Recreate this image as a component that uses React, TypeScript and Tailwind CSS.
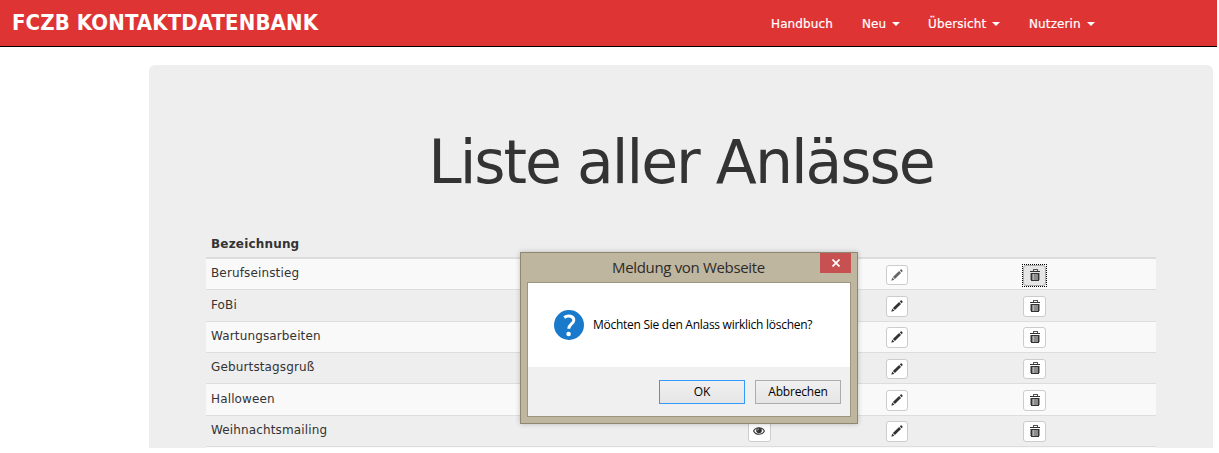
import type { ReactNode } from 'react';

const ui = "font-['DejaVu_Sans',sans-serif]";

const rows = [
  { name: 'Berufseinstieg', row: 'h-[31px]', pad: 'pt-[6px]', btn: 'h-5', text: 'pt-[5px]' },
  { name: 'FoBi', row: 'h-8', pad: 'pt-[6px]', btn: 'h-[21px]', text: 'pt-[6px]' },
  { name: 'Wartungsarbeiten', row: 'h-[31px]', pad: 'pt-[5px]', btn: 'h-[21px]', text: 'pt-[5px]' },
  { name: 'Geburtstagsgruß', row: 'h-[31px]', pad: 'pt-[6px]', btn: 'h-5', text: 'pt-[5px]' },
  { name: 'Halloween', row: 'h-8', pad: 'pt-[6px]', btn: 'h-[21px]', text: 'pt-[6px]' },
  { name: 'Weihnachtsmailing', row: 'h-[31px]', pad: 'pt-[5px]', btn: 'h-[21px]', text: 'pt-[5px]' },
];

const nav = [
  { label: 'Handbuch', caret: false, cls: 'w-[91px]' },
  { label: 'Neu', caret: true, cls: 'w-[66px]' },
  { label: 'Übersicht', caret: true, cls: 'w-[101px]' },
  { label: 'Nutzerin', caret: true, cls: 'w-[70px]' },
];

function EyeIcon() {
  return (
    <svg className="-ml-px mb-px" width="12" height="10" viewBox="0 0 12 10" fill="none">
      <path d="M.6 5C2.6.6 9.4.6 11.4 5 9.4 9.4 2.6 9.4.6 5Z" stroke="#333" strokeWidth="1.1" />
      <circle cx="6" cy="4.5" r="2.8" fill="#333" />
      <path d="M4.5 4.4Q4.6 3 6 2.8" stroke="#ccc" strokeWidth=".8" />
    </svg>
  );
}

function PencilIcon({ faded }: { faded: boolean }) {
  return (
    <svg className="mb-px" width="12" height="12" viewBox="0 0 12 12" fill={faded ? '#666' : '#333'}>
      <path d="M.3 11.7 1.3 8.6 3.4 10.7Z" />
      <path d="M1.9 8 8.1 2 10 3.9 3.9 10Z" />
      <path d="M8.8 1.4 9.7.5Q10.2.1 10.7.6L11.4 1.3Q11.9 1.8 11.4 2.4L10.6 3.2Z" />
    </svg>
  );
}

function TrashIcon() {
  return (
    <svg className="mb-[2px] ml-px" width="10" height="12" viewBox="0 0 10 12" fill="none" shapeRendering="crispEdges">
      <path d="M3 2V.5H7V2" stroke="#555" />
      <path d="M0 2.5H10" stroke="#333" />
      <path d="M1.5 4.5H8.5V11.5H1.5Z" fill="#8c8c8c" stroke="#333" />
      <path d="M3.5 5V11" stroke="#b5b5b5" />
      <path d="M.5 4V11" stroke="#999" />
      <path d="M9.5 4V11" stroke="#999" />
    </svg>
  );
}

function IconButton({ children, cls, pressed = false }: { children: ReactNode; cls: string; pressed?: boolean }) {
  return (
    <button
      className={`flex items-center justify-center rounded-[3px] border ${
        pressed ? 'border-[#adadad] bg-[#e6e6e6]' : 'border-[#ccc] bg-white'
      } ${cls}`}
    >
      {children}
    </button>
  );
}

function Dialog() {
  return (
    <div className="absolute left-[520px] top-[252px] flex h-[172px] w-[338px] flex-col border border-[#8f8772] bg-[#bfb6a0] px-[6px] pb-[6px] font-['Open_Sans',sans-serif] shadow-[0_0_5px_rgba(0,0,0,0.22)]">
      <div className="flex h-[29px] shrink-0 justify-end">
        <div className="flex-1 pl-[85px] pt-[3px] text-[15px] leading-[22px] tracking-[-0.33px] whitespace-nowrap text-[#2d2b27]">
          Meldung von Webseite
        </div>
        <button className="flex h-5 w-[31px] items-center justify-center bg-[#c75050]">
          <svg width="8" height="8" viewBox="0 0 8 8" stroke="white" strokeWidth="1.7">
            <path d="M.5.5 7.5 7.5M7.5.5.5 7.5" />
          </svg>
        </button>
      </div>
      <div className="flex flex-1 flex-col border border-[#9f957e] bg-[#f0f0f0]">
        <div className="flex h-[84px] items-center bg-white pl-[26px]">
          <svg width="30" height="30" viewBox="0 0 30 30" fill="none">
            <circle cx="15" cy="15" r="15" fill="#1979ca" />
            <path d="M10.2 7.4C14 4.8 20 5.8 19.8 10.2 19.6 14 14.8 14 14.8 18.8" stroke="white" strokeWidth="3" />
            <circle cx="14.6" cy="24" r="2.3" fill="white" />
          </svg>
          <p className="ml-[9px] text-[12px] tracking-[-0.27px] whitespace-nowrap text-black">
            Möchten Sie den Anlass wirklich löschen?
          </p>
        </div>
        <div className="flex justify-end gap-[10px] pr-[9px] pt-[13px] text-[12px] tracking-[-0.2px] text-black">
          <button className="h-6 w-[86px] border border-[#3399ff] bg-gradient-to-b from-[#f0f0f0] to-[#e5e5e5] leading-[22px]">
            OK
          </button>
          <button className="h-6 w-[86px] border border-[#acacac] bg-gradient-to-b from-[#f0f0f0] to-[#e5e5e5] leading-[22px]">
            Abbrechen
          </button>
        </div>
      </div>
    </div>
  );
}

export default function App() {
  return (
    <div className={`relative h-[453px] w-[1219px] overflow-hidden bg-white text-[#333] ${ui}`}>
      <header className="flex h-[47px] w-[1217px] border-b border-black bg-[#df3434] text-white">
        <div className="w-[771px] pl-[12px] pt-[8px] text-[22px] leading-[30px] font-bold tracking-[0.1px] whitespace-nowrap font-['DejaVu_Sans_Condensed','DejaVu_Sans',sans-serif] [font-stretch:condensed]">
          FCZB KONTAKTDATENBANK
        </div>
        <nav className="mt-[14px] flex h-5 text-[12px] leading-5 tracking-[0.12px]">
          {nav.map((n) => (
            <a key={n.label} className={`flex items-center whitespace-nowrap [-webkit-text-stroke:0.2px_white] ${n.cls}`}>
              {n.label}
              {n.caret && (
                <svg className="ml-[6px]" width="8" height="4" viewBox="0 0 8 4" fill="white">
                  <path d="M0 0H8L4 4Z" />
                </svg>
              )}
            </a>
          ))}
        </nav>
      </header>
      <main className="mt-[18px] ml-[149px] h-[383px] w-[1064px] overflow-hidden rounded-t-[6px] bg-[#eee] px-[57px] pt-[62px]">
        <h1 className="h-[70px] text-center text-[60px] leading-[70px] tracking-[-2px] whitespace-nowrap">Liste aller Anlässe</h1>
        <div className="mt-[32px] h-[30px] border-b-2 border-[#ddd] pl-[5px] pt-[6px] text-[12px] leading-[18px] font-bold tracking-[0.18px]">
          Bezeichnung
        </div>
        {rows.map((r, i) => (
          <div
            key={r.name}
            className={`flex border-b border-[#ddd] pl-[5px] ${r.row} ${i % 2 === 0 ? 'bg-[#f9f9f9]' : ''}`}
          >
            <div className={`w-[537px] text-[12px] leading-[18px] tracking-[0.14px] ${r.text}`}>{r.name}</div>
            <div className={`w-[138px] ${r.pad}`}>
              <IconButton cls={`w-[23px] ${r.btn}`}>
                <EyeIcon />
              </IconButton>
            </div>
            <div className={`w-[137px] ${r.pad}`}>
              <IconButton cls={`w-[22px] ${r.btn}`}>
                <PencilIcon faded={i === 0} />
              </IconButton>
            </div>
            {i === 0 ? (
              <div className="-ml-px mt-[5px] h-[23px] w-[25px] border border-dotted border-black">
                <IconButton cls="w-[23px] h-[21px]" pressed>
                  <TrashIcon />
                </IconButton>
              </div>
            ) : (
              <div className={r.pad}>
                <IconButton cls={`w-[23px] ${r.btn}`}>
                  <TrashIcon />
                </IconButton>
              </div>
            )}
          </div>
        ))}
        <div className="h-[1px] bg-[#f9f9f9]" />
      </main>
      <Dialog />
    </div>
  );
}
